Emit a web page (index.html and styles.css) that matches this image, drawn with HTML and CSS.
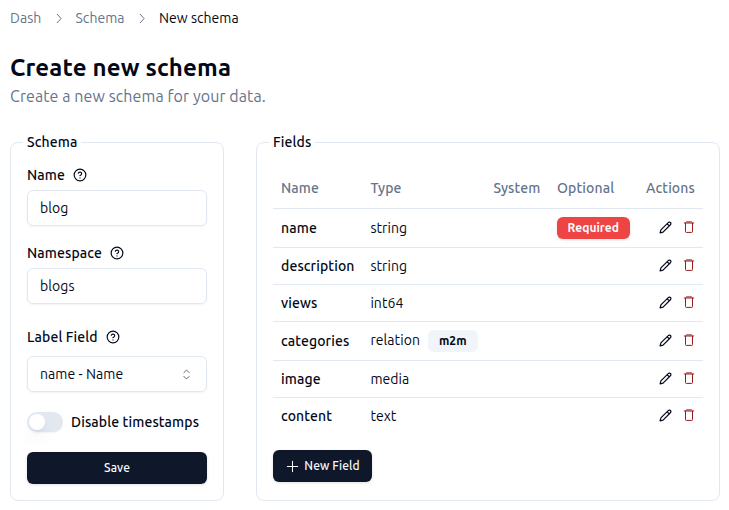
FILE: index.html
```html
<!DOCTYPE html>
<html lang="en">
<head>
<meta charset="utf-8">
<title>New schema</title>
<link rel="stylesheet" href="styles.css">
</head>
<body>
<svg class="defs" aria-hidden="true">
  <symbol id="chevron" viewBox="0 0 15 15"><path d="M6.2 3.3 10.1 7.5 6.2 11.7" fill="none" stroke="currentColor" stroke-linecap="round"/></symbol>
  <symbol id="help" viewBox="0 0 24 24"><g fill="none" stroke="currentColor" stroke-width="2" stroke-linecap="round" stroke-linejoin="round"><circle cx="12" cy="12" r="10"/><path d="M9.09 9a3 3 0 0 1 5.83 1c0 2-3 3-3 3M12 17h.01"/></g></symbol>
  <symbol id="sort" viewBox="0 0 15 15"><path d="M4.9 5.6 7.5 3 10.1 5.6M4.9 9.4 7.5 12 10.1 9.4" fill="none" stroke="currentColor" stroke-linecap="round"/></symbol>
  <symbol id="plus" viewBox="0 0 15 15"><path d="M7.5 2.3v10.4M2.3 7.5h10.4" fill="none" stroke="currentColor" stroke-linecap="round"/></symbol>
  <symbol id="pencil" viewBox="0 0 24 24"><path d="M17 3a2.85 2.83 0 1 1 4 4L7.5 20.5 2 22l1.5-5.5ZM15 5l4 4" fill="none" stroke="currentColor" stroke-width="2.2" stroke-linecap="round" stroke-linejoin="round"/></symbol>
  <symbol id="trash" viewBox="0 0 16 16"><path d="M5.5 2.9h5M3.3 4h9.4M4.5 4v8.6q0 .8.8.8h5.4q.8 0 .8-.8V4" fill="none" stroke="currentColor" stroke-linecap="round"/></symbol>
</svg>
<nav class="breadcrumb">
  <a class="crumb-dash">Dash</a><svg><use href="#chevron"/></svg><a class="crumb-schema">Schema</a><svg><use href="#chevron"/></svg><span class="current">New schema</span>
</nav>
<header>
  <h1>Create new schema</h1>
  <p>Create a new schema for your data.</p>
</header>
<main>
  <fieldset class="schema">
    <legend>Schema</legend>
    <label class="label">Name <svg><use href="#help"/></svg></label>
    <div class="control">blog</div>
    <label class="label second">Namespace <svg><use href="#help"/></svg></label>
    <div class="control">blogs</div>
    <label class="label third">Label Field <svg><use href="#help"/></svg></label>
    <div class="control select"><span>name - Name</span><svg><use href="#sort"/></svg></div>
    <div class="toggle"><span class="switch"><i></i></span><span class="toggle-text">Disable timestamps</span></div>
    <button class="button save">Save</button>
  </fieldset>
  <fieldset class="fields">
    <legend>Fields</legend>
    <table>
      <colgroup><col class="c1"><col class="c2"><col class="c3"><col class="c4"><col class="c5"></colgroup>
      <thead><tr><th>Name</th><th>Type</th><th>System</th><th>Optional</th><th>Actions</th></tr></thead>
      <tbody>
        <tr class="tall"><td>name</td><td>string</td><td></td><td><span class="badge required">Required</span></td><td><div class="actions"><svg class="pencil"><use href="#pencil"/></svg><svg class="trash"><use href="#trash"/></svg></div></td></tr>
        <tr><td>description</td><td>string</td><td></td><td></td><td><div class="actions"><svg class="pencil"><use href="#pencil"/></svg><svg class="trash"><use href="#trash"/></svg></div></td></tr>
        <tr><td>views</td><td>int64</td><td></td><td></td><td><div class="actions"><svg class="pencil"><use href="#pencil"/></svg><svg class="trash"><use href="#trash"/></svg></div></td></tr>
        <tr class="tall"><td>categories</td><td><div class="relation"><span>relation</span><span class="badge">m2m</span></div></td><td></td><td></td><td><div class="actions"><svg class="pencil"><use href="#pencil"/></svg><svg class="trash"><use href="#trash"/></svg></div></td></tr>
        <tr><td>image</td><td>media</td><td></td><td></td><td><div class="actions"><svg class="pencil"><use href="#pencil"/></svg><svg class="trash"><use href="#trash"/></svg></div></td></tr>
        <tr><td>content</td><td>text</td><td></td><td></td><td><div class="actions"><svg class="pencil"><use href="#pencil"/></svg><svg class="trash"><use href="#trash"/></svg></div></td></tr>
      </tbody>
    </table>
    <button class="button add"><svg><use href="#plus"/></svg>New Field</button>
  </fieldset>
</main>
</body>
</html>
```
FILE: styles.css
```css
* { box-sizing: border-box; }
body { margin: 0; padding: 8px 9px 0 10px; background: #fff; color: #020817; font: 14px/20px Ubuntu, "Noto Sans", sans-serif; height: 510px; overflow: hidden; letter-spacing: .07px; }
svg { display: block; width: 15px; height: 15px; flex: none; }
.defs { display: none; }
.breadcrumb { display: flex; align-items: center; height: 20px; color: #64748b; letter-spacing: .03px; }
.breadcrumb a { width: 31px; white-space: nowrap; }
.breadcrumb .crumb-schema { width: 49px; }
.breadcrumb svg { margin: 0 9.5px 0 10px; position: relative; left: -.5px; }
.breadcrumb .current { color: #020817; }
header { margin-top: 24px; height: 80px; }
h1 { margin: 0; font-size: 24px; line-height: 32px; font-weight: 700; letter-spacing: .16px; }
header p { margin: 0; font-size: 16px; line-height: 24px; color: #64748b; letter-spacing: .09px; }
main { display: grid; grid-template-columns: 214px 464px; gap: 32px; height: 369px; }
fieldset { margin: 0; min-width: 0; border: 1px solid #e2e8f0; border-radius: 8px; padding: 0 16px; height: 369px; }
legend { margin-left: -4px; padding: 0 4px; height: 20px; font-weight: 500; letter-spacing: .13px; }
.label { display: flex; align-items: center; gap: 8px; height: 14px; margin-top: 16px; font-weight: 500; letter-spacing: .12px; }
.label svg { width: 14px; height: 14px; }
.label.second { margin-top: 20px; }
.label.third { margin-top: 26px; }
.control { display: flex; align-items: center; height: 36px; margin-top: 8px; padding: 0 12px; border: 1px solid #e2e8f0; border-radius: 6px; box-shadow: 0 1px 2px rgba(0,0,0,.05); }
.select { justify-content: space-between; margin-top: 12px; }
.select svg { opacity: .6; margin-right: .5px; }
.toggle { display: flex; align-items: center; gap: 8px; height: 20px; margin-top: 20px; font-weight: 500; letter-spacing: .12px; white-space: nowrap; }
.switch { width: 36px; height: 20px; padding: 2px; border-radius: 10px; background: #e2e8f0; box-shadow: 0 1px 2px rgba(0,0,0,.05); }
.switch i { display: block; width: 16px; height: 16px; border-radius: 50%; background: #fff; box-shadow: 0 10px 15px -3px rgba(0,0,0,.1), 0 4px 6px -4px rgba(0,0,0,.1); }
.button { display: flex; align-items: center; justify-content: center; height: 32px; border: 0; border-radius: 6px; padding: 0 12px; background: #0f172a; color: #f8fafc; font: 500 12px/16px Ubuntu, "Noto Sans", sans-serif; letter-spacing: .1px; box-shadow: 0 1px 3px rgba(0,0,0,.12); white-space: nowrap; }
.save { width: 180px; margin-top: 20px; }
table { width: 430px; margin-top: 16px; table-layout: fixed; border-collapse: separate; border-spacing: 0; }
.c1 { width: 89px; }
.c2 { width: 123px; }
.c3 { width: 64px; }
.c4 { width: 89px; }
.c5 { width: 65px; }
th, td { height: 37px; padding: 0 8px; border-bottom: 1px solid #e2e8f0; text-align: left; vertical-align: middle; white-space: nowrap; }
td:nth-child(2), th:nth-child(2), th:nth-child(3) { padding-left: 8.4px; }
th { height: 41px; color: #64748b; font-weight: 500; letter-spacing: .12px; }
td:first-child { font-weight: 500; letter-spacing: .12px; }
.tall td { height: 39px; }
tbody tr:last-child td { height: 36px; border-bottom: 0; }
.badge { display: inline-block; height: 22px; padding: 0 11px; border-radius: 6px; background: #f1f5f9; font-size: 12px; line-height: 22px; font-weight: 600; }
.required { display: block; width: 73px; padding: 0 10.5px; background: #ef4444; color: #f8fafc; box-shadow: 0 1px 3px rgba(0,0,0,.12); letter-spacing: .05px; }
.relation { display: flex; align-items: center; gap: 8px; }
.relation > span:first-child { margin-top: -2px; }
.actions { display: flex; align-items: center; justify-content: flex-end; gap: 9.5px; margin: 0 -2px 2px 0; }
.actions .pencil { width: 13px; height: 13px; }
.trash { width: 16px; height: 16px; color: #991b1b; }
.add { width: 99px; margin-top: 16px; gap: 4px; }
```
